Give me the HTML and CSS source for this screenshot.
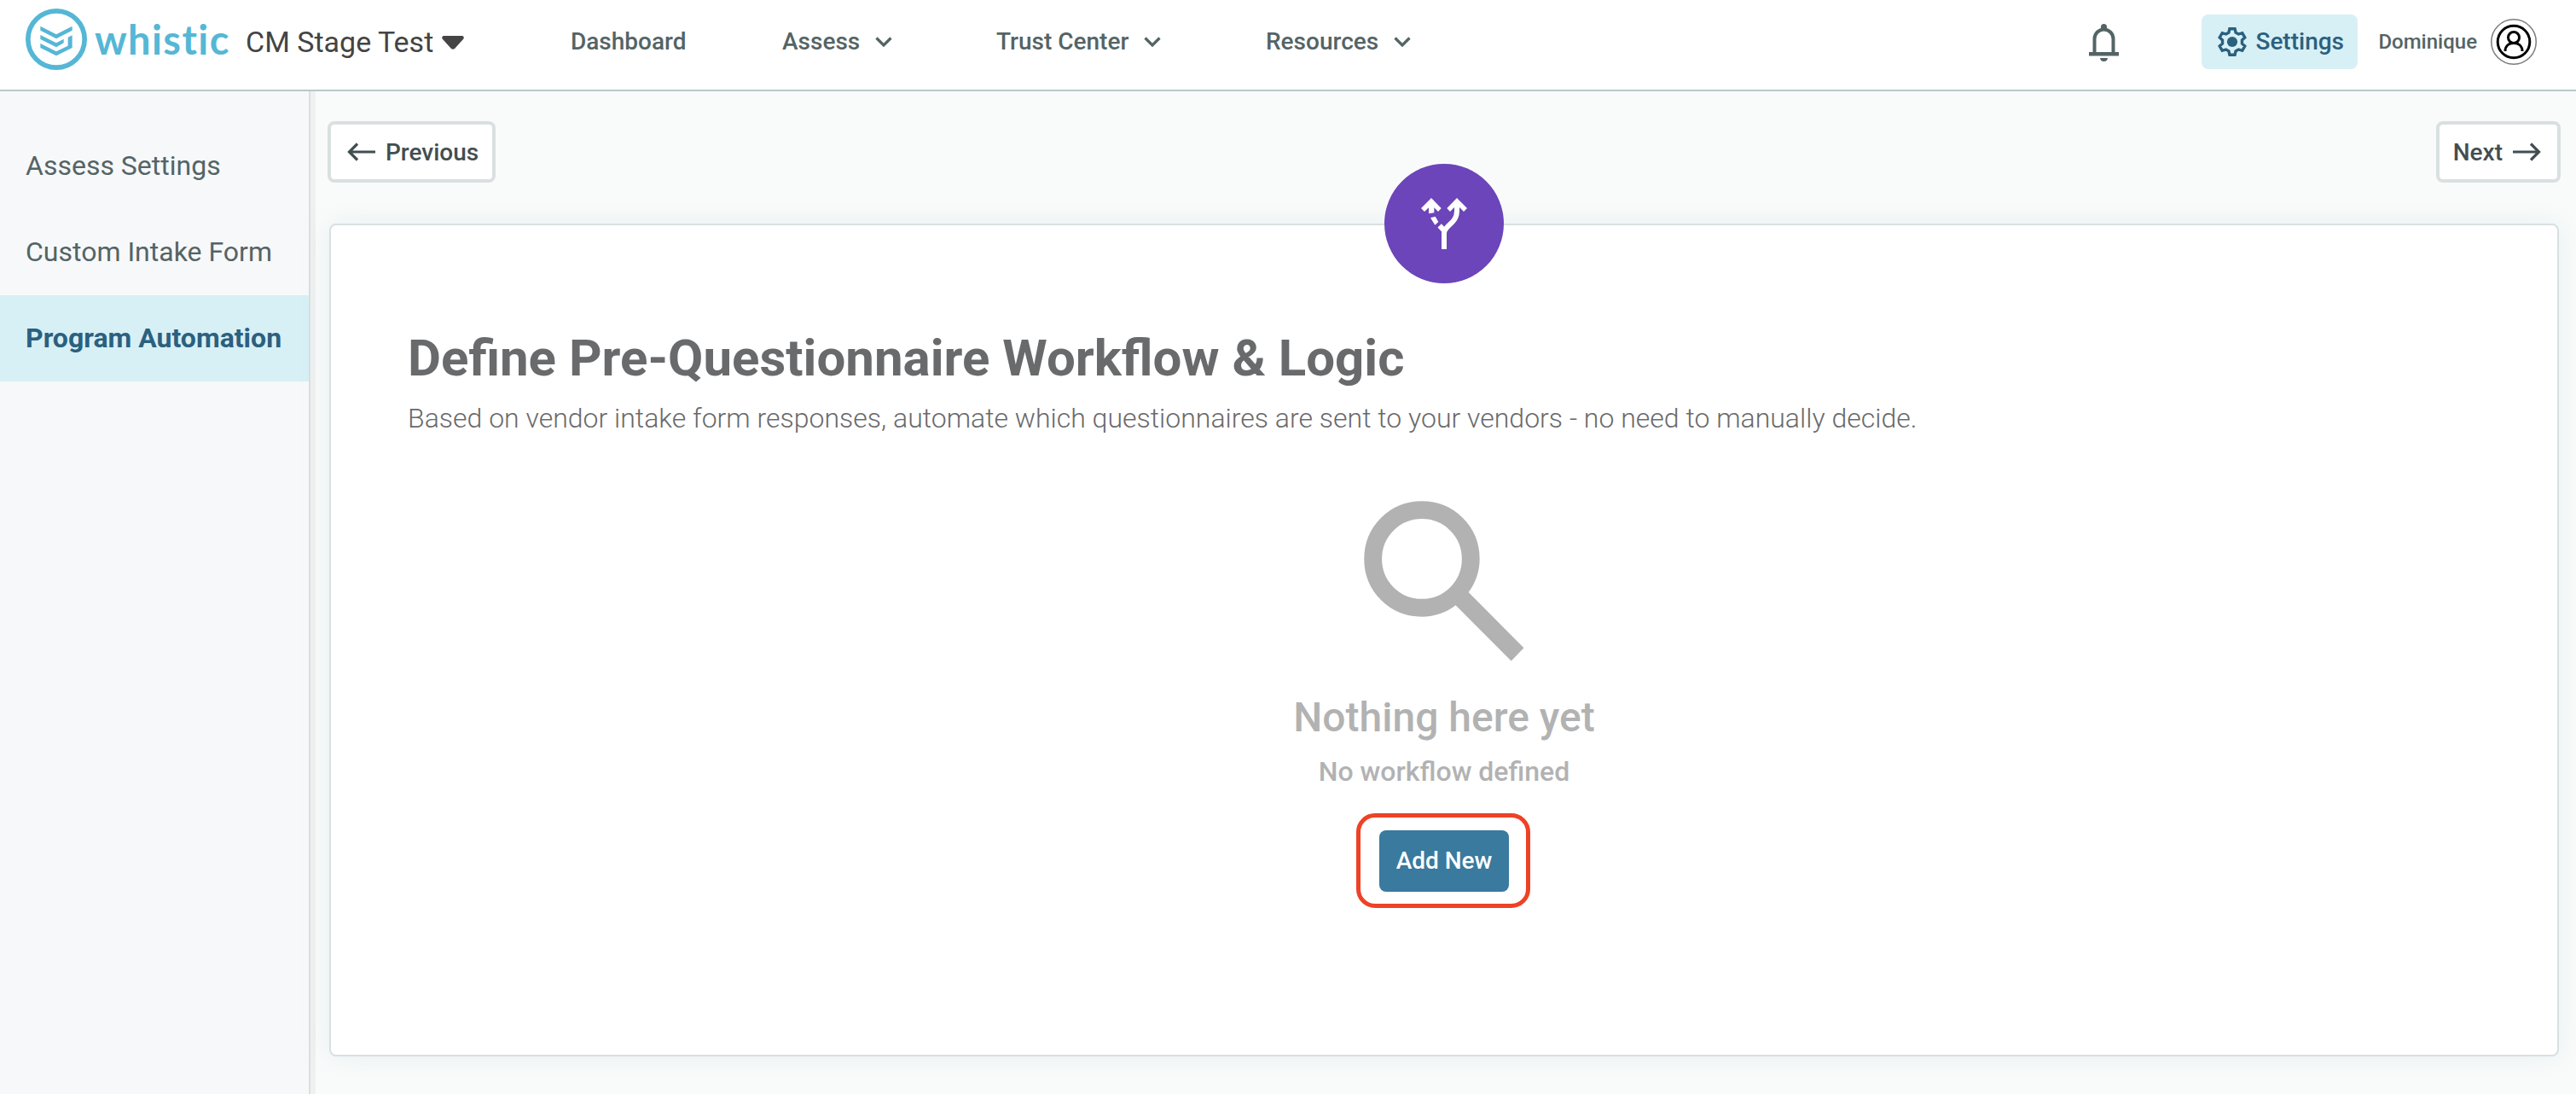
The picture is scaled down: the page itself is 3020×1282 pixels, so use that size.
FILE: index.html
```html
<!DOCTYPE html>
<html lang="en">
<head>
    <meta charset="UTF-8">
    <meta name="viewport" content="width=device-width, initial-scale=1.0">
    <title>Whistic - Program Automation</title>
    <link rel="stylesheet" href="styles.css">
</head>
<body>
    <header class="topbar">
        <a class="logo">
            <svg class="logo-mark" viewBox="30 30 216 216">
                <circle cx="138" cy="138" r="99.5" fill="none" stroke="currentColor" stroke-width="17"/>
                <path fill="currentColor" d="M82 92l56 29 56-29v15l-56 29-56-29zM82 123l56 28 26-14v14l-26 15-56-28zM82 153l56 28 41-20v-30l15-7v44l-56 28-56-28z"/>
            </svg>
            <span class="logo-text">whistic</span>
        </a>
        <div class="company">
            <span>CM Stage Test</span>
            <svg class="caret" viewBox="0 0 26 16"><path fill="currentColor" d="M2 0h22q3 1 1 4L15 15q-2 1.500-4 0L1 4Q-1 1 2 0z"/></svg>
        </div>
        <nav class="main-nav">
            <a>Dashboard</a>
            <a>Assess <svg class="chevron" viewBox="0 0 20 12"><path d="M1.500 1.500l8.500 8.500 8.500-8.500"/></svg></a>
            <a>Trust Center <svg class="chevron" viewBox="0 0 20 12"><path d="M1.500 1.500l8.500 8.500 8.500-8.500"/></svg></a>
            <a>Resources <svg class="chevron" viewBox="0 0 20 12"><path d="M1.500 1.500l8.500 8.500 8.500-8.500"/></svg></a>
        </nav>
        <div class="user-area">
            <svg class="bell" viewBox="0 0 35 44">
                <path fill="none" stroke="currentColor" stroke-width="4" d="M6.500 34V17.500a11 11 0 0 1 22 0V34"/>
                <path fill="currentColor" d="M0 33h35v4.500H0zM14 8V3.500a3.500 3.500 0 0 1 7 0V8zM13 40h9q-.5 4-4.500 4t-4.500-4z"/>
            </svg>
            <a class="settings">
                <svg class="gear" viewBox="0 0 100 100">
                    <path fill="none" stroke="currentColor" stroke-width="10" d="M41 5H59L62 18 71.700 23.600 84.500 19.700 93.500 35.300 83.700 44.400V55.600L93.500 64.700 84.500 80.300 71.700 76.400 62 82 59 95H41L38 82 28.300 76.400 15.500 80.300 6.500 64.700 16.300 55.600V44.400L6.500 35.300 15.500 19.700 28.300 23.600 38 18z"/>
                    <circle cx="50" cy="50" r="18" fill="currentColor"/>
                </svg>
                <span>Settings</span>
            </a>
            <span class="user-name">Dominique</span>
            <svg class="avatar" viewBox="0 0 54 54">
                <circle cx="27" cy="27" r="26.250" stroke="#7c7c7c" stroke-width="1.500"/>
                <g stroke="#000" stroke-width="3">
                    <circle cx="27" cy="27" r="18.800"/>
                    <circle cx="27" cy="22" r="6.500"/>
                    <path d="M17 38c0-6 4-9.500 10-9.500S37 32 37 38"/>
                </g>
            </svg>
        </div>
    </header>

    <div class="page">
        <aside class="sidebar">
            <a>Assess Settings</a>
            <a>Custom Intake Form</a>
            <a class="active">Program Automation</a>
        </aside>

        <main class="content">
            <div class="pager">
                <button class="btn-outline btn-prev">
                    <svg class="arrow" viewBox="0 0 34 22"><path d="M33 11H2M12 1.500L2.500 11l9.500 9.500"/></svg>
                    Previous
                </button>
                <button class="btn-outline btn-next">
                    Next
                    <svg class="arrow" viewBox="0 0 34 22"><path d="M1 11h31M22 1.500l9.500 9.500-9.500 9.500"/></svg>
                </button>
            </div>

            <section class="card">
                <div class="card-badge">
                    <svg viewBox="0 0 162 180">
                        <path fill="#fff" d="M36 0l35 36-11 12-14-14v18l-19 3V34L12 48 0 36zM33 70l17-5 11 19-12 11zM126 0l36 36-12 12-14-14h-20l-14 14-11-12z"/>
                        <path fill="none" stroke="#fff" stroke-width="18" d="M126 30v16c0 44-45 50-45 78v56M65 97l14 15"/>
                    </svg>
                </div>
                <h1>Define Pre-Questionnaire Workflow &amp; Logic</h1>
                <p class="subtitle">Based on vendor intake form responses, automate which questionnaires are sent to your vendors - no need to manually decide.</p>

                <div class="empty">
                    <svg class="search-icon" viewBox="0 0 24 24"><path fill="currentColor" d="M19.550 20.980l-6.250-6.280q-.75.6-1.725.95T9.500 16q-2.725 0-4.612-1.888T3 9.500q0-2.725 1.888-4.612T9.500 3q2.725 0 4.612 1.888T16 9.500q0 1.100-.35 2.075T14.750 13.250l6.220 6.270zM9.500 14q1.875 0 3.188-1.312T14 9.500q0-1.875-1.312-3.188T9.500 5Q7.625 5 6.312 6.312T5 9.500q0 1.875 1.312 3.188T9.500 14z"/></svg>
                    <h2>Nothing here yet</h2>
                    <h3>No workflow defined</h3>
                    <div class="highlight">
                        <button class="btn-primary">Add New</button>
                    </div>
                </div>
            </section>
        </main>
    </div>
</body>
</html>
```
FILE: styles.css
```css
* {
    box-sizing: border-box;
}
body {
    margin: 0;
    height: 1282px;
    display: flex;
    flex-direction: column;
    font-family: Roboto, sans-serif;
    color: #546465;
    background-color: #f9fbfa;
    overflow: hidden;
}
svg {
    display: block;
    flex: none;
}
button {
    font-family: inherit;
    font-size: 28px;
    font-weight: 500;
    cursor: pointer;
}

/* top bar */
.topbar {
    flex: none;
    height: 107px;
    padding: 0 46px 8px 30px;
    display: flex;
    align-items: center;
    background-color: #fff;
    border-bottom: 2px solid #b8c8cc;
    white-space: nowrap;
}
.logo {
    display: flex;
    align-items: center;
    width: 258px;
    color: #55b7d5;
}
.logo-mark {
    width: 72px;
    height: 72px;
    margin-bottom: 5px;
}
.logo-text {
    margin: 0 0 5px 9px;
    font-family: Lato, sans-serif;
    font-size: 47px;
    font-weight: 700;
    line-height: 60px;
    letter-spacing: 1.4px;
}
.company {
    display: flex;
    align-items: center;
    width: 381px;
    font-size: 34px;
    color: #444;
}
.caret {
    width: 26px;
    height: 16px;
    margin: 3px 0 0 10px;
}
.main-nav {
    display: grid;
    grid-template-columns: 248px 251px 316px 200px;
    font-size: 28px;
    font-weight: 500;
}
.main-nav a {
    display: flex;
    align-items: center;
}
.chevron {
    width: 20px;
    height: 12px;
    margin-left: 18px;
}
.chevron path,
.arrow path {
    fill: none;
    stroke: currentColor;
    stroke-width: 3.2;
}
.user-area {
    margin-left: auto;
    display: flex;
    align-items: center;
}
.bell {
    width: 35px;
    height: 44px;
    margin: 2px 97px 0 0;
}
.settings {
    display: flex;
    align-items: center;
    gap: 10px;
    width: 183px;
    height: 64px;
    padding-left: 19px;
    border-radius: 8px;
    background-color: #d7f0f5;
    color: #2b607f;
    font-size: 28px;
    font-weight: 500;
}
.gear {
    width: 34px;
    height: 34px;
}
.user-name {
    margin: 0 16px 0 24px;
    font-size: 24px;
    font-weight: 500;
}
.avatar {
    width: 54px;
    height: 54px;
    fill: none;
}

/* sidebar */
.page {
    flex: 1;
    display: flex;
}
.sidebar {
    width: 370px;
    padding-top: 37px;
    background-color: #f7f8fa;
    border-right: 6px solid #eff0f0;
    box-shadow: inset -2px 0 0 #d9e0e1;
}
.sidebar a {
    display: block;
    width: 362px;
    height: 101px;
    padding-left: 30px;
    font-size: 32px;
    line-height: 101px;
}
.sidebar a.active {
    background-color: #d7f0f5;
    color: #2b607f;
    font-weight: 700;
}

/* content */
.content {
    flex: 1;
    padding: 35px 18px 44px 14px;
    display: flex;
    flex-direction: column;
}
.pager {
    display: flex;
    justify-content: space-between;
    margin: 0 0 48px;
}
.btn-outline {
    display: flex;
    align-items: center;
    gap: 11px;
    height: 72px;
    border: 4px solid #d9e0e1;
    border-radius: 8px;
    background-color: #fff;
    color: #434e50;
}
.btn-prev {
    padding: 0 16px 0 19px;
}
.btn-next {
    padding: 0 19px 0 16px;
}
.arrow {
    width: 34px;
    height: 22px;
}
.card {
    position: relative;
    flex: 1;
    margin: 0 2px;
    padding: 116px 90px 0;
    border: 2px solid #d9e0e1;
    border-radius: 8px;
    background-color: #fff;
    box-shadow: 0 0 32px rgba(160, 190, 205, 0.2);
}
/* round badge sitting on the top edge of the card */
.card-badge {
    position: absolute;
    top: -72px;
    left: 50%;
    width: 140px;
    height: 140px;
    margin-left: -70px;
    display: flex;
    align-items: center;
    justify-content: center;
    border-radius: 50%;
    background-color: #6b45b9;
}
.card-badge svg {
    width: 54px;
    height: 60px;
}
h1 {
    margin: 0;
    font-size: 60px;
    font-weight: 700;
    line-height: 80px;
    color: #696a6c;
}
.subtitle {
    margin: 10px 0 0;
    font-size: 32px;
    font-weight: 300;
    line-height: 40px;
    color: #696a6c;
}
.empty {
    display: flex;
    flex-direction: column;
    align-items: center;
    margin-top: 46px;
    color: #b2b2b2;
}
.search-icon {
    width: 250px;
    height: 250px;
}
h2 {
    margin: 5px 0 0;
    font-size: 48px;
    font-weight: 500;
    line-height: 60px;
}
h3 {
    margin: 13px 0 0;
    font-size: 32px;
    font-weight: 500;
    line-height: 40px;
}
.highlight {
    display: flex;
    align-items: center;
    justify-content: center;
    width: 204px;
    height: 111px;
    margin: 29px 2px 0 0;
    padding-left: 2px;
    border: 5px solid #ee4226;
    border-radius: 22px;
}
.btn-primary {
    width: 152px;
    height: 72px;
    padding: 0;
    border: none;
    border-radius: 8px;
    background-color: #397a9e;
    color: #fff;
}
```
